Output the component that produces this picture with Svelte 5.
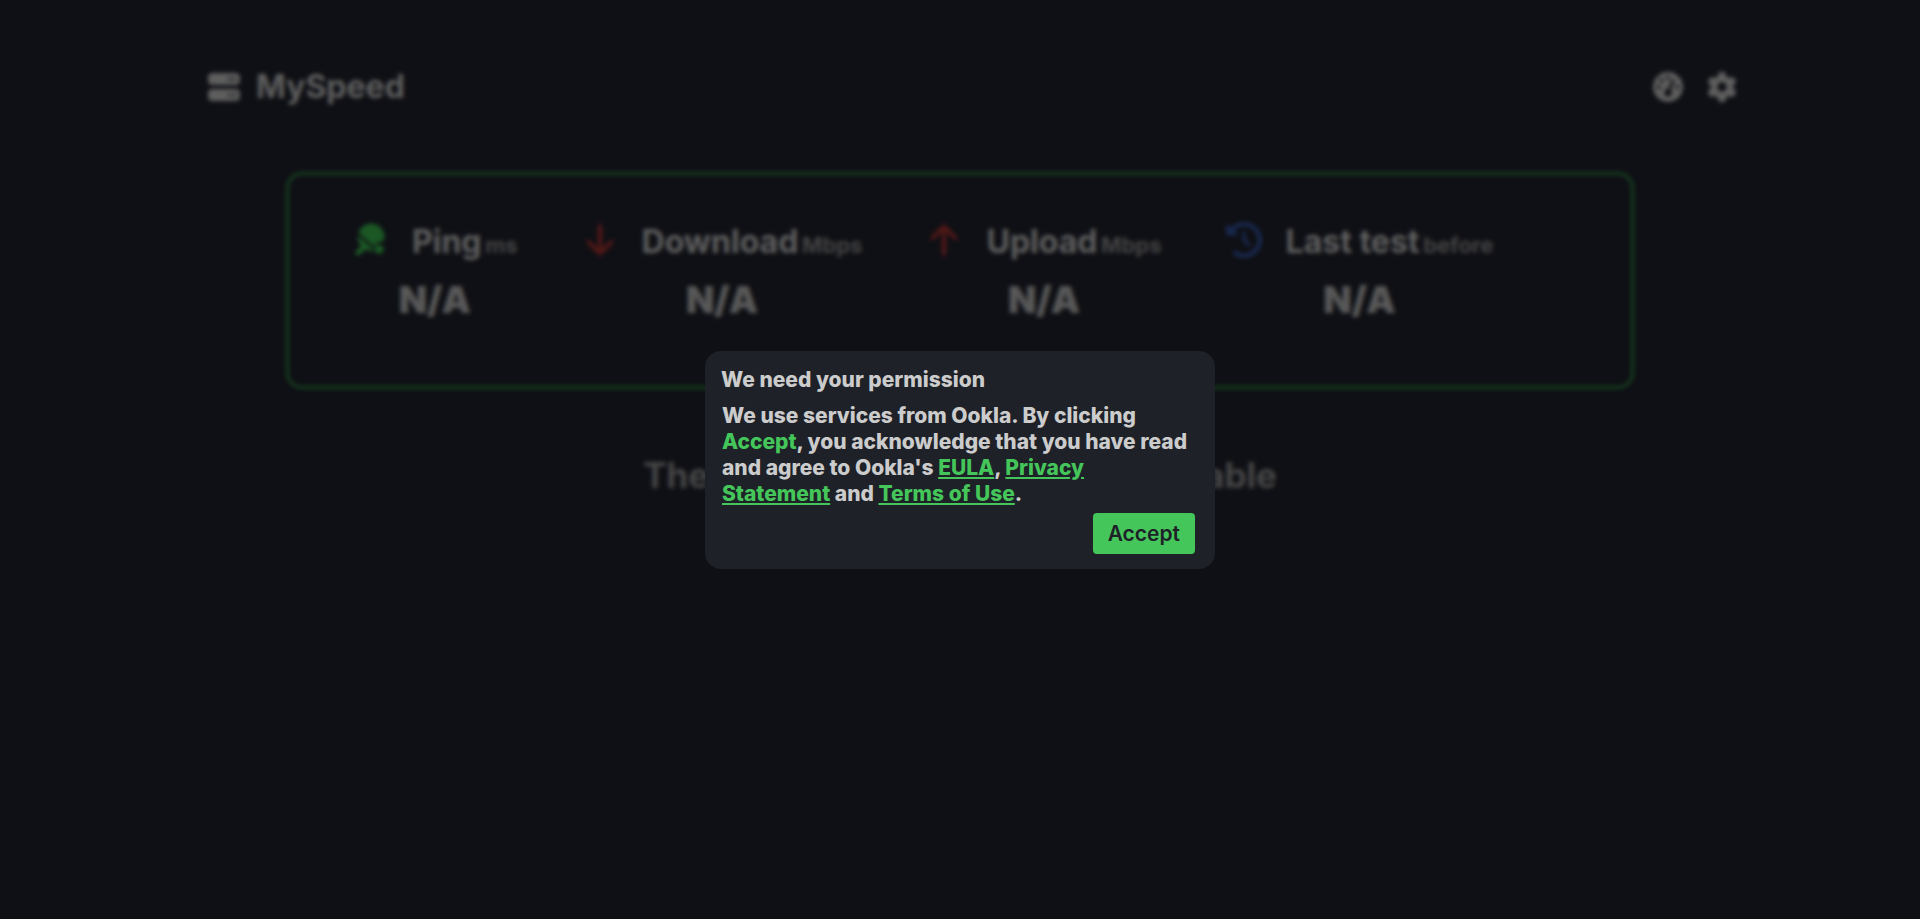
<script>
  const paths = {
    server: 'M64 32C28.7 32 0 60.7 0 96v64c0 35.3 28.7 64 64 64H448c35.3 0 64-28.7 64-64V96c0-35.3-28.7-64-64-64H64zm280 72a24 24 0 1 1 0 48 24 24 0 1 1 0-48zm48 24a24 24 0 1 1 48 0 24 24 0 1 1-48 0zM64 288c-35.3 0-64 28.7-64 64v64c0 35.3 28.7 64 64 64H448c35.3 0 64-28.7 64-64V352c0-35.3-28.7-64-64-64H64zm280 72a24 24 0 1 1 0 48 24 24 0 1 1 0-48zm56 24a24 24 0 1 1 48 0 24 24 0 1 1-48 0z',
    gauge: 'M0 256a256 256 0 1 1 512 0A256 256 0 1 1 0 256zM288 96a32 32 0 1 0 -64 0 32 32 0 1 0 64 0zM256 416c35.3 0 64-28.7 64-64c0-17.4-6.9-33.1-18.1-44.6L366 161.7c5.3-12.1-.2-26.3-12.3-31.6s-26.3 .2-31.6 12.3L257.9 288c-.6 0-1.3 0-1.9 0c-35.3 0-64 28.7-64 64s28.7 64 64 64zM176 144a32 32 0 1 0 -64 0 32 32 0 1 0 64 0zM96 288a32 32 0 1 0 0-64 32 32 0 1 0 0 64zm352-32a32 32 0 1 0 -64 0 32 32 0 1 0 64 0z',
    gear: 'M495.9 166.6c3.2 8.7 .5 18.4-6.4 24.6l-43.3 39.4c1.1 8.3 1.7 16.8 1.7 25.4s-.6 17.1-1.7 25.4l43.3 39.4c6.9 6.2 9.6 15.9 6.4 24.6c-4.4 11.9-9.7 23.3-15.8 34.3l-4.7 8.1c-6.6 11-14 21.4-22.1 31.2c-5.9 7.2-15.7 9.6-24.5 6.8l-55.7-17.7c-13.4 10.3-28.2 18.9-44 25.4l-12.5 57.1c-2 9.1-9 16.3-18.2 17.8c-13.8 2.3-28 3.5-42.5 3.5s-28.7-1.2-42.5-3.5c-9.2-1.5-16.2-8.7-18.2-17.8l-12.5-57.1c-15.8-6.5-30.6-15.1-44-25.4L83.1 425.9c-8.8 2.8-18.6 .3-24.5-6.8c-8.1-9.8-15.5-20.2-22.1-31.2l-4.7-8.1c-6.1-11-11.4-22.4-15.8-34.3c-3.2-8.7-.5-18.4 6.4-24.6l43.3-39.4C64.6 273.1 64 264.6 64 256s.6-17.1 1.7-25.4L22.4 191.2c-6.9-6.2-9.6-15.9-6.4-24.6c4.4-11.9 9.7-23.3 15.8-34.3l4.7-8.1c6.6-11 14-21.4 22.1-31.2c5.9-7.2 15.7-9.6 24.5-6.8l55.7 17.7c13.4-10.3 28.2-18.9 44-25.4l12.5-57.1c2-9.1 9-16.3 18.2-17.8C227.3 1.2 241.5 0 256 0s28.7 1.2 42.5 3.5c9.2 1.5 16.2 8.7 18.2 17.8l12.5 57.1c15.8 6.5 30.6 15.1 44 25.4l55.7-17.7c8.8-2.8 18.6-.3 24.5 6.8c8.1 9.8 15.5 20.2 22.1 31.2l4.7 8.1c6.1 11 11.4 22.4 15.8 34.3zM256 336a80 80 0 1 0 0-160 80 80 0 1 0 0 160z',
    ping: 'M92 158A188 188 0 0 1 454 266C400 276 334 298 312 350ZM80 192L300 382C298 396 297 408 298 422C262 420 232 408 206 386L112 462C96 476 72 476 56 462C42 448 42 426 56 412L130 340C96 304 78 256 80 192ZM386 322a66 66 0 1 1 0 132a66 66 0 1 1 0-132z',
    down: 'M233.4 470.6c12.5 12.5 32.8 12.5 45.3 0l160-160c12.5-12.5 12.5-32.8 0-45.3s-32.8-12.5-45.3 0L288 370.8 288 64c0-17.7-14.3-32-32-32s-32 14.3-32 32l0 306.7L118.6 265.4c-12.5-12.5-32.8-12.5-45.3 0s-12.5 32.8 0 45.3l160 160z',
    up: 'M233.4 41.4c12.5-12.5 32.8-12.5 45.3 0l160 160c12.5 12.5 12.5 32.8 0 45.3s-32.8 12.5-45.3 0L288 141.2 288 448c0 17.7-14.3 32-32 32s-32-14.3-32-32l0-306.7L118.6 246.6c-12.5 12.5-32.8 12.5-45.3 0s-12.5-32.8 0-45.3l160-160z',
    history: 'M75 75L41 41C25.9 25.9 0 36.6 0 57.9V168c0 13.3 10.7 24 24 24H134.1c21.4 0 32.1-25.9 17-41l-30.8-30.8C155 85.5 203 64 256 64c106 0 192 86 192 192s-86 192-192 192c-40.8 0-78.6-12.7-109.7-34.4c-14.5-10.1-34.4-6.6-44.6 7.9s-6.6 34.4 7.9 44.6C151.2 495 201.7 512 256 512c141.4 0 256-114.6 256-256S397.4 0 256 0C185.3 0 121.3 28.7 75 75zm181 53c-13.3 0-24 10.7-24 24V256c0 6.4 2.5 12.5 7 17l72 72c9.4 9.4 24.6 9.4 33.9 0s9.4-24.6 0-33.9l-65-65V152c0-13.3-10.7-24-24-24z'
  };

  const stats = [
    { icon: 'ping', tone: 'green', label: 'Ping', unit: 'ms', value: 'N/A' },
    { icon: 'down', tone: 'red', label: 'Download', unit: 'Mbps', value: 'N/A' },
    { icon: 'up', tone: 'red', label: 'Upload', unit: 'Mbps', value: 'N/A' },
    { icon: 'history', tone: 'blue', label: 'Last test', unit: 'before', value: 'N/A' }
  ];

  let open = $state(true);
</script>

{#snippet icon(name)}
  <svg class="icon" viewBox="0 0 512 512" aria-hidden="true"><path fill="currentColor" d={paths[name]} /></svg>
{/snippet}

<div class="page">
  <header>
    <h1>{@render icon('server')}MySpeed</h1>
    <nav>
      <button class="tool" aria-label="Start speedtest">{@render icon('gauge')}</button>
      <button class="tool" aria-label="Settings">{@render icon('gear')}</button>
    </nav>
  </header>

  <main>
    <section class="latest">
      {#each stats as stat}
        <div class="stat">
          <div class="heading">
            <span class="symbol {stat.tone}">{@render icon(stat.icon)}</span>
            <h2>{stat.label} <small>{stat.unit}</small></h2>
          </div>
          <p class="value">{stat.value}</p>
        </div>
      {/each}
    </section>
    <p class="notice">There are currently no tests available</p>
  </main>
</div>

{#if open}
  <div class="overlay">
    <div class="dialog" role="dialog" aria-modal="true" aria-labelledby="dialog-title">
      <h4 id="dialog-title">We need your permission</h4>
      <p>
        We use services from Ookla. By clicking <span class="accent">Accept</span>, you acknowledge that you
        have read and agree to Ookla's <a href="#eula">EULA</a>, <a href="#privacy">Privacy Statement</a> and
        <a href="#terms">Terms of Use</a>.
      </p>
      <button class="accept" onclick={() => (open = false)}>Accept</button>
    </div>
  </div>
{/if}

<style>
  :global(body) {
    margin: 0;
    background: #1e202a;
    color: #bcbcbc;
    font-family: Inter, sans-serif;
  }

  h1, h2, h4, p {
    margin: 0;
    font-weight: 700;
  }

  .icon {
    display: block;
    width: 100%;
    height: 100%;
  }

  .page {
    min-height: 100vh;
  }

  header {
    display: flex;
    align-items: center;
    justify-content: space-between;
    padding: 67px 183px 0 208px;
  }

  h1 {
    display: flex;
    align-items: center;
    gap: 16px;
    font-size: 32px;
    line-height: 40px;
  }

  h1 .icon {
    width: 32px;
    height: 32px;
  }

  nav {
    display: flex;
    gap: 24px;
  }

  .tool {
    width: 30px;
    height: 30px;
    padding: 0;
    border: 0;
    background: none;
    color: inherit;
  }

  main {
    padding: 65px 286px 0;
  }

  .latest {
    display: flex;
    gap: 64px;
    padding: 47px 63px 64px;
    border: 3px solid #2d7e3c;
    border-radius: 16px;
  }

  .heading {
    display: flex;
    align-items: flex-start;
    gap: 24px;
  }

  .symbol {
    width: 36px;
    height: 36px;
  }

  .green { color: #36b048; }
  .red { color: #a03030; }
  .blue { color: #304f9c; }

  h2 {
    font-size: 32px;
    line-height: 40px;
    white-space: nowrap;
  }

  small {
    margin-left: -4px;
    color: #868686;
    font-size: 22px;
    line-height: 24px;
  }

  .value {
    margin-top: 16px;
    color: #b0b0b0;
    font-size: 37px;
    font-weight: 900;
    line-height: 44px;
    text-align: center;
  }

  .notice {
    margin-top: 66px;
    color: #8c8c8c;
    font-size: 35px;
    line-height: 40px;
    text-align: center;
  }

  .overlay {
    position: fixed;
    inset: 0;
    display: flex;
    align-items: center;
    justify-content: center;
    background: rgba(0, 0, 0, 0.5);
    backdrop-filter: blur(2px);
  }

  .dialog {
    box-sizing: border-box;
    display: flex;
    flex-direction: column;
    width: 510px;
    padding: 16px 16px 15px;
    border-radius: 16px;
    background: #1e2228;
    color: #ccc;
  }

  h4 {
    font-size: 21px;
    line-height: 26px;
  }

  .dialog p {
    margin: 10px 0 6px;
    padding: 0 8px 0 1px;
    font-size: 21px;
    line-height: 26px;
  }

  .dialog h4, .dialog p {
    font-weight: 800;
  }

  .accent, a {
    color: #45c65a;
  }

  .accept {
    align-self: flex-end;
    margin-right: 4px;
    padding: 8px 15px;
    border: 0;
    border-radius: 4px;
    background: #45c65a;
    color: #1e2228;
    font-family: inherit;
    font-size: 21px;
    font-weight: 600;
    line-height: 25px;
  }
</style>
